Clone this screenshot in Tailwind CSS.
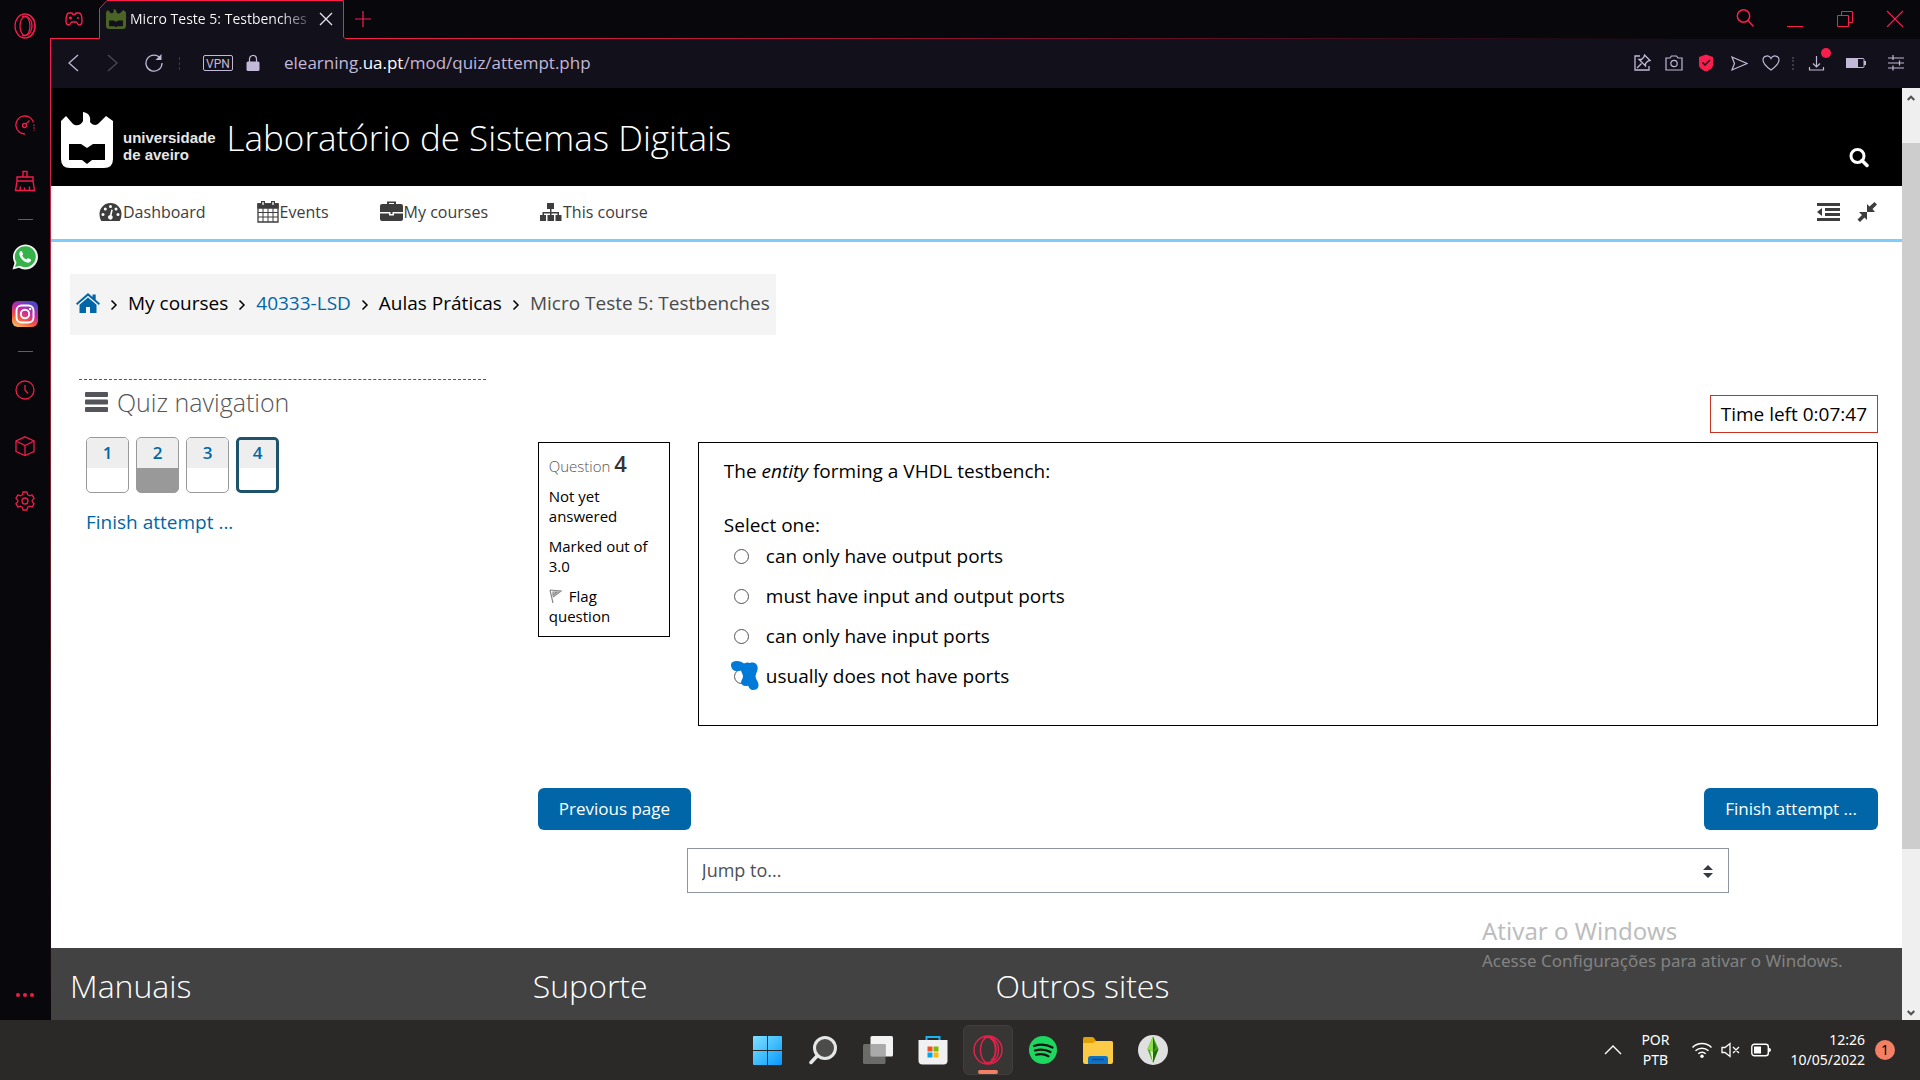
<!DOCTYPE html>
<html lang="pt">
<head>
<meta charset="utf-8">
<title>Micro Teste 5: Testbenches</title>
<script src="https://cdn.jsdelivr.net/npm/@tailwindcss/browser@4"></script>
</head>
<body class="min-h-screen flex flex-col bg-[#08070c] font-['Open_Sans',sans-serif] text-black">
<div class="flex flex-1">

  <!-- Browser sidebar -->
  <aside class="relative w-[51px] shrink-0 flex flex-col items-center bg-[#08070c] pr-px text-[#ee1c4a]">
    <div class="absolute right-0 top-[38px] bottom-0 w-px bg-gradient-to-b from-[#fa1e4e] to-[#08070c]"></div>
    <button class="mt-[13px] size-[26px]" aria-label="Opera"><svg viewBox="0 0 26 26" class="size-full" fill="none" stroke="currentColor" stroke-width="1.3"><ellipse cx="13" cy="13" rx="10" ry="12"/><ellipse cx="13" cy="13" rx="5" ry="9.500"/><path d="M10 3.500c7-1.500 10 4 10 9.500s-3 11-10 9.500M16 1.500c5 2 7 7 7 11.500s-2 9.500-7 11.500"/></svg></button>
    <button class="mt-[76px] size-5" aria-label="Speed"><svg viewBox="0 0 20 20" class="size-full" fill="none" stroke="currentColor" stroke-width="1.300"><path d="M10 19a9 9 0 1 1 8.500-11.500"/><path d="M19 9.500v6" stroke-dasharray="1.500 1.200"/><circle cx="9.500" cy="10.500" r="2"/><path d="M11 9l3.500-3.500"/></svg></button>
    <button class="mt-[35px] size-[22px]" aria-label="Cleaner"><svg viewBox="0 0 22 22" class="size-full" fill="none" stroke="currentColor" stroke-width="1.400"><path d="M9 7V1.500h4V7M3 11V7h16v4zM3 11l-1.500 9.500h19L19 11M6 20.500l.5-4M10.500 20.500v-3M15.500 20.500v-4"/></svg></button>
    <div class="mt-[27px] h-px w-[15px] bg-current"></div>
    <button class="mt-6 size-[26px]" aria-label="WhatsApp"><svg viewBox="0 0 26 26" class="size-full"><path d="M.5 25.500l2-6.500A12.500 12.500 0 1 1 7 23.700z" fill="#f3f3f3"/><path d="M3 23l1.500-4.500A10.500 10.500 0 1 1 8 21.800z" fill="#35b34a"/><path d="M9 7c-1.200.7-2 2-1.500 4 1 3.500 4 6.500 7.500 7.500 2 .5 3.500-.5 4-2 .2-.8 0-1-.5-1.200l-2.300-1c-.5-.2-.8 0-1.500 1.200-2-.6-3.600-2-4.500-4 .9-.9 1-1.100.8-1.600L10 7.500c-.2-.5-.5-.6-1-.5z" fill="#fff"/></svg></button>
    <button class="mt-[31px] size-[26px]" aria-label="Instagram"><svg viewBox="0 0 26 26" class="size-full"><defs><linearGradient id="ig" x1=".1" y1="1" x2=".6" y2="0"><stop offset="0" stop-color="#fdc468"/><stop offset=".35" stop-color="#f3563f"/><stop offset=".65" stop-color="#c32aa3"/><stop offset="1" stop-color="#5146c8"/></linearGradient></defs><rect width="26" height="26" rx="6" fill="url(#ig)"/><rect x="4.500" y="4.500" width="17" height="17" rx="5" fill="none" stroke="#fff" stroke-width="1.900"/><circle cx="13" cy="13" r="4.200" fill="none" stroke="#fff" stroke-width="1.900"/><circle cx="18.200" cy="8" r="1.200" fill="#fff"/></svg></button>
    <div class="mt-6 h-px w-[15px] bg-current"></div>
    <button class="mt-7 size-5" aria-label="History"><svg viewBox="0 0 20 20" class="size-full" fill="none" stroke="currentColor" stroke-width="1.300"><circle cx="10" cy="10" r="9"/><path d="M10 5v5l3 3.500"/></svg></button>
    <button class="mt-9 size-5" aria-label="Extensions"><svg viewBox="0 0 20 20" class="size-full" fill="none" stroke="currentColor" stroke-width="1.300"><path d="M10 .8l9 4.200v10.500L10 19.500 1 15.500V5zM1 5l9 4.500L19 5M10 9.500v10"/></svg></button>
    <button class="mt-[35px] size-5" aria-label="Settings"><svg viewBox="0 0 20 20" class="size-full" fill="none" stroke="currentColor" stroke-width="1.300" stroke-linejoin="round"><path d="M8 1h4l.6 2.700 1.900 1.100 2.600-.9 2 3.500L17.200 9.200v1.600l1.900 1.800-2 3.500-2.600-.9-1.900 1.100L12 19H8l-.6-2.700-1.900-1.100-2.600.9-2-3.500 1.900-1.800V9.200L.9 7.400l2-3.500 2.600.9 1.900-1.100z"/><circle cx="10" cy="10" r="3"/></svg></button>
    <button class="mt-auto mb-[23px] flex gap-[3px]" aria-label="More"><i class="size-1 rounded-full bg-current"></i><i class="size-1 rounded-full bg-current"></i><i class="size-1 rounded-full bg-current"></i></button>
  </aside>

  <div class="flex min-w-0 flex-1 flex-col">
    <!-- Tab strip -->
    <div class="flex h-[39px] text-[#fa1e4e]">
      <button class="flex w-12 items-center justify-center border-b border-[#fa1e4e] pr-2" aria-label="GX Corner"><svg viewBox="0 0 18 14" class="ml-[6px] h-[14px] w-[18px]" fill="none" stroke="currentColor" stroke-width="1.400"><path d="M4 1h3l1 1.500h2L11 1h3c2 0 3 4 3 8 0 3-1.500 4-3 4-1.500 0-1.500-3-3-3H7c-1.500 0-1.500 3-3 3-1.500 0-3-1-3-4 0-4 1-8 3-8z"/><path d="M4 6h3M5.500 4.500v3M12 6h2"/></svg></button>
      <div class="relative w-[246px] shrink-0">
        <svg viewBox="0 0 246 39" class="absolute inset-0 h-[39px] w-[246px]"><path d="M0 39V38.500L.5 8.500 8 1H244.500V37l1.500 1.500V39z" fill="#12101a"/><path d="M0 38.500H.5V8.500L8 .5H244.500V37l1.500 1.500" fill="none" stroke="#fa1e4e"/></svg>
        <div class="relative flex h-[34px] items-center pl-[7px] pr-3 pt-1">
          <svg viewBox="0 0 52 56" class="h-5 w-5 shrink-0" preserveAspectRatio="none"><path d="M0 9l5-6 7 8c4 3 7 0 8-3V0c6 1 8 5 7 10 3 4 8 4 12-1l6-6 7 6v38q0 9-9 9H9q-9 0-9-9z" fill="#4b6426"/><path d="M8 32h12l6 4 6-4h12v16H30l-4 3-4-3H8z" fill="#12101a"/></svg>
          <span class="ml-1 bg-gradient-to-r from-white from-85% to-[#55535c] bg-clip-text text-sm leading-6 whitespace-nowrap text-transparent">Micro Teste 5: Testbenches</span>
          <button class="ml-auto" aria-label="Close tab"><svg viewBox="0 0 14 14" class="size-[14px]" stroke="#e8e6f0" stroke-width="1.300"><path d="M1 1l12 12M13 1L1 13"/></svg></button>
        </div>
      </div>
      <div class="relative flex flex-1 justify-end">
        <div class="absolute bottom-0 left-0 h-px w-full bg-gradient-to-r from-[#fa1e4e] to-transparent to-85%"></div>
        <button class="absolute left-[10px] top-[11px]" aria-label="New tab"><svg viewBox="0 0 16 16" class="size-4" stroke="currentColor" stroke-width="1.200"><path d="M8 0v16M0 8h16"/></svg></button>
        <div class="flex gap-8 pr-4 pt-[9px]">
          <button class="size-[18px]" aria-label="Search tabs"><svg viewBox="0 0 18 18" class="size-full" fill="none" stroke="currentColor" stroke-width="1.500"><circle cx="7.500" cy="7" r="6.200"/><path d="M12 11.500l5.500 6"/></svg></button>
          <button class="size-[18px]" aria-label="Minimize"><svg viewBox="0 0 18 18" class="size-full" stroke="currentColor"><path d="M1 17.500h16"/></svg></button>
          <button class="size-[18px]" aria-label="Restore"><svg viewBox="0 0 18 18" class="size-full" fill="none" stroke="currentColor"><path d="M1.500 6.500h11v11h-11zM5.500 6.500v-4h11v11h-4"/></svg></button>
          <button class="size-[18px]" aria-label="Close"><svg viewBox="0 0 18 18" class="size-full" stroke="currentColor" stroke-width="1.200"><path d="M1 2l16 16M17 2L1 18"/></svg></button>
        </div>
      </div>
    </div>

    <!-- Address bar -->
    <div class="flex h-[49px] items-center bg-[#12101a] pl-4 pr-[15px] pb-px text-[#c2b8d8]">
      <button aria-label="Back"><svg viewBox="0 0 12 18" class="h-[18px] w-3" fill="none" stroke="currentColor" stroke-width="1.300"><path d="M11 1L2 9l9 8"/></svg></button>
      <button class="ml-7" aria-label="Forward"><svg viewBox="0 0 12 18" class="h-[18px] w-3" fill="none" stroke="#4c4858" stroke-width="1.300"><path d="M1 1l9 8-9 8"/></svg></button>
      <button class="ml-[26px]" aria-label="Reload"><svg viewBox="0 0 18 18" class="size-[18px]" fill="none" stroke="currentColor" stroke-width="1.300"><path d="M15.500 4.500A8 8 0 1 0 17 9"/><path d="M16.500 0v6h-6z" fill="currentColor" stroke="none"/></svg></button>
      <div class="ml-4 h-[13px] border-l border-dashed border-[#3c3948]"></div>
      <span class="ml-[23px] flex h-4 w-[30px] items-center justify-center rounded-xs border border-[#c2b8d8] pt-px font-['Roboto',sans-serif] text-xs leading-none">VPN</span>
      <svg viewBox="0 0 14 16" class="ml-[13px] h-4 w-[14px]"><rect y="6.500" x=".5" width="13" height="9.500" rx="1.500" fill="currentColor"/><path d="M3.500 7V4a3.500 3.500 0 0 1 7 0v3" fill="none" stroke="currentColor" stroke-width="1.200"/></svg>
      <span class="ml-6 text-[17px]">elearning.<span class="text-white">ua.pt</span>/mod/quiz/attempt.php</span>
      <div class="ml-auto flex items-center">
        <button aria-label="Pin"><svg viewBox="0 0 18 18" class="size-[18px]" fill="none" stroke="currentColor" stroke-width="1.300"><path d="M7 2H2v14h14v-4M4 14l4.500-4.500M11.500 1l5.500 5.500-2 .5-2.500 2.500V12L6 5.500h2.500L11 3z"/></svg></button>
        <button class="ml-[14px]" aria-label="Snapshot"><svg viewBox="0 0 18 18" class="size-[18px]" fill="none" stroke="currentColor" stroke-width="1.200"><path d="M1 4h4l1.500-2h5L13 4h4v12H1z"/><circle cx="9" cy="9.500" r="3.200"/></svg></button>
        <button class="ml-[15px]" aria-label="Ad blocker"><svg viewBox="0 0 16 18" class="h-[18px] w-4"><path d="M8 .5L15 3v8c0 3-3 5-7 6.500C4 16 1 14 1 11V3z" fill="#fa1e4e"/><path d="M4.500 8.500L7 11l5-5" fill="none" stroke="#12101a" stroke-width="1.500"/></svg></button>
        <button class="ml-4" aria-label="Send"><svg viewBox="0 0 18 18" class="size-[18px]" fill="none" stroke="currentColor" stroke-width="1.200"><path d="M2 3l15 6.500L2 16l2.500-6.500z"/></svg></button>
        <button class="ml-[14px]" aria-label="Bookmark"><svg viewBox="0 0 18 18" class="size-[18px]" fill="none" stroke="currentColor" stroke-width="1.200"><path d="M9 16C4 12.500 1 9.500 1 6c0-4.500 6-5.500 8-1.500C11 .5 17 1.500 17 6c0 3.500-3 6.500-8 10z"/></svg></button>
        <div class="ml-3 h-[13px] border-l-2 border-dotted border-[#3c3948]"></div>
        <button class="relative ml-[14px]" aria-label="Downloads"><svg viewBox="0 0 18 18" class="size-[18px]" fill="none" stroke="currentColor" stroke-width="1.200"><path d="M1.500 13v3h14v-3M8.500 2v11M5 9.500L8.500 13 12 9.500"/></svg><i class="absolute -right-[5px] -top-[6px] size-[10px] rounded-full bg-[#fa1e4e]"></i></button>
        <button class="ml-5" aria-label="Battery saver"><svg viewBox="0 0 20 12" class="h-3 w-5"><rect x=".5" y="1.500" width="17.500" height="9" rx="1" fill="none" stroke="currentColor"/><path d="M0 1h12v10H0zM18 4h2v4h-2z" fill="currentColor"/></svg></button>
        <button class="ml-[21px]" aria-label="Easy setup"><svg viewBox="0 0 18 18" class="size-[18px]" stroke="currentColor" stroke-width="1.200"><path d="M1 4h16M1 9h16M1 14h16M6 1v5M12.500 6.500v5M6 11.500v5"/></svg></button>
      </div>
    </div>

    <div class="flex flex-1">
      <!-- Web page -->
      <div class="flex min-w-0 flex-1 flex-col bg-white">
        <header class="flex h-[98px] bg-black pl-[10px] pr-[33px] text-white">
          <svg viewBox="0 0 52 56" class="mt-6 h-14 w-[52px] shrink-0" preserveAspectRatio="none"><path d="M0 9l5-5 7 8c4 3 9 0 10-3V0c6 1 8 5 7 10 3 4 7 4 10 0l6-6 7 5v38q0 9-9 9H9q-9 0-9-9z" fill="#fff"/><path d="M8 32h12l6 4 6-4h12v16H31l-5 4-5-4H8z" fill="#000"/></svg>
          <div class="ml-[10px] mt-[41px] font-['Liberation_Sans',sans-serif] text-[15px] leading-[17px] font-bold text-[#e6e6e6]">universidade<br>de aveiro</div>
          <h1 class="ml-[11px] mt-6 text-[35px] leading-[52px] font-light whitespace-nowrap">Laboratório de Sistemas Digitais</h1>
          <button class="ml-auto mt-10 self-start pt-5" aria-label="Search"><svg viewBox="0 0 20 20" class="size-5" fill="none" stroke="#fff" stroke-width="3"><circle cx="8.500" cy="8" r="6.500"/><path d="M13 12.500l5 5" stroke-width="3.500" stroke-linecap="round"/></svg></button>
        </header>

        <nav class="flex h-14 items-center border-b-3 border-[#7dcdfc] pl-12 pr-6 pb-[2px] text-base text-[#3d3d3d]">
          <a href="#" class="flex items-center gap-px"><svg viewBox="0 0 23 20" class="h-5 w-[23px]"><path d="M11.500 1A11 11 0 0 0 .5 12c0 3 .8 5 1.800 7h18.400c1-2 1.800-4 1.800-7a11 11 0 0 0-11-11z" fill="currentColor"/><g fill="#fff"><circle cx="4" cy="12.500" r="1.500"/><circle cx="6.300" cy="7" r="1.500"/><circle cx="11.500" cy="4.500" r="1.500"/><circle cx="19" cy="12.500" r="1.500"/><circle cx="17" cy="7" r="1.500"/><path d="M12.300 7.500l1.500.4-1.200 5.300a2.400 2.400 0 1 1-1.700-.3z"/></g></svg>Dashboard</a>
          <a href="#" class="ml-[51px] flex items-center gap-px"><svg viewBox="0 0 22 23" class="h-[23px] w-[22px]" fill="none" stroke="currentColor" stroke-width="1.300"><path d="M1 4h20v18H1z"/><path d="M1 4h20v4H1z" fill="currentColor"/><path d="M6 8v14M11 8v14M16 8v14M1 12.500h20M1 17h20" stroke-width="1"/><path d="M6 1v5M16 1v5" stroke-width="4"/><path d="M6 2v3M16 2v3" stroke="#fff"/></svg>Events</a>
          <a href="#" class="ml-[51px] flex items-center gap-px"><svg viewBox="0 0 23 23" class="size-[23px]" fill="currentColor"><path d="M7 4V1.500h9V4h-2V3H9v1zM0 6q0-2 2-2h19q2 0 2 2v6H0zM0 13.500h9v2h5v-2h9V19q0 2-2 2H2q-2 0-2-2zM10.500 12h2v2h-2z"/></svg>My courses</a>
          <a href="#" class="ml-[51px] flex items-center gap-px"><svg viewBox="0 0 23 20" class="h-5 w-[23px]" fill="currentColor"><path d="M8 1h7v6h-2.500v3H20v3h2.500v6h-6v-6h2v-1.500h-6V13h2.500v6H8.500v-6H11v-1.500H5V13h2v6H1v-6h2.500v-3H11V7H8z"/></svg>This course</a>
          <div class="ml-auto flex items-center gap-4">
            <button aria-label="Toggle blocks"><svg viewBox="0 0 23 18" class="h-[18px] w-[23px]" fill="currentColor"><path d="M0 0h23v3H0zM8 5h15v3H8zM8 10h15v3H8zM0 15h23v3H0zM5 5v8L0 9z"/></svg></button>
            <button aria-label="Full screen"><svg viewBox="0 0 22 22" class="size-[22px]" fill="currentColor"><path d="M11 3l2.500 2.500L18.500 1 21 3.500 16.500 8 19 11h-8zM3 11h8v8l-2.500-2.500L4 21l-2.500-2.500L6 14z"/></svg></button>
          </div>
        </nav>

        <main class="flex-1 pl-[19px] pr-6">
          <nav class="mt-8 inline-flex h-[61px] items-center bg-[#f4f4f4] px-[6px] pb-[3px] text-[19px]" aria-label="Breadcrumb">
            <a href="#" aria-label="Home"><svg viewBox="0 0 24 20" class="h-5 w-6" fill="#0066a7"><path d="M12 0l4.500 4V1.500h3.200v5.200L24 10.500 22.800 12 12 2.800 1.200 12 0 10.500z"/><path d="M12 4.500l8.500 7.200V20H14v-6h-4v6H3.500v-8.300z"/></svg></a>
            <svg viewBox="0 0 8 12" class="mx-[10px] mt-[3px] h-3 w-2" fill="none" stroke="#000" stroke-width="1.500"><path d="M1.500 1.500L6 6l-4.500 4.500"/></svg>
            <span>My courses</span>
            <svg viewBox="0 0 8 12" class="mx-[10px] mt-[3px] h-3 w-2" fill="none" stroke="#000" stroke-width="1.500"><path d="M1.500 1.500L6 6l-4.500 4.500"/></svg>
            <a href="#" class="text-[#0066a7]">40333-LSD</a>
            <svg viewBox="0 0 8 12" class="mx-[10px] mt-[3px] h-3 w-2" fill="none" stroke="#000" stroke-width="1.500"><path d="M1.500 1.500L6 6l-4.500 4.500"/></svg>
            <span>Aulas Práticas</span>
            <svg viewBox="0 0 8 12" class="mx-[10px] mt-[3px] h-3 w-2" fill="none" stroke="#000" stroke-width="1.500"><path d="M1.500 1.500L6 6l-4.500 4.500"/></svg>
            <span class="text-[#4a4a4a]">Micro Teste 5: Testbenches</span>
          </nav>

          <div class="mt-11 flex">
            <section class="ml-[9px] w-9/40 shrink-0 border-t border-dashed border-[#555] pt-[6px]">
              <h2 class="flex items-center gap-[9px] pl-[6px] text-[25px] leading-8 font-light text-[#54555a]"><svg viewBox="0 0 23 20" class="h-5 w-[23px]" fill="currentColor"><rect width="23" height="5" rx="1"/><rect y="7.500" width="23" height="5" rx="1"/><rect y="15" width="23" height="5" rx="1"/></svg>Quiz navigation</h2>
              <div class="mt-[19px] flex gap-[7px] pl-[7px] text-[17px] font-semibold text-[#0066a7]">
                <a href="#" class="flex h-14 w-[43px] flex-col overflow-hidden rounded-[5px] border border-[#999] bg-white"><span class="h-[30px] bg-[#eee] text-center leading-[30px]">1</span></a>
                <a href="#" class="flex h-14 w-[43px] flex-col overflow-hidden rounded-[5px] border border-[#999] bg-[#999]"><span class="h-[30px] bg-[#eee] text-center leading-[30px]">2</span></a>
                <a href="#" class="flex h-14 w-[43px] flex-col overflow-hidden rounded-[5px] border border-[#999] bg-white"><span class="h-[30px] bg-[#eee] text-center leading-[30px]">3</span></a>
                <a href="#" class="flex h-14 w-[43px] flex-col overflow-hidden rounded-[5px] border-3 border-[#1f536b] bg-white"><span class="h-7 bg-[#eee] text-center leading-[26px]">4</span></a>
              </div>
              <a href="#" class="mt-[17px] ml-[7px] inline-block text-[19px] leading-6 text-[#0066a7]">Finish attempt ...</a>
            </section>

            <form class="ml-[52px] flex min-w-0 flex-1 flex-col pt-4 text-[19px]">
              <div class="flex h-[38px] items-center self-end border border-[#ca3120] px-[10px]">Time left 0:07:47</div>
              <div class="mt-[9px] flex items-start">
                <div class="w-[132px] shrink-0 border border-black px-[10px] pt-[6px] pb-[10px] text-[15px] leading-5">
                  <h3 class="leading-7 font-light text-[#555]">Question <span class="text-[22px] leading-7 font-semibold text-[#333]">4</span></h3>
                  <div class="mt-[6px]">Not yet answered</div>
                  <div class="mt-[10px]">Marked out of 3.0</div>
                  <label class="mt-[10px] block cursor-pointer"><input type="checkbox" class="sr-only"><svg viewBox="0 0 13 15" class="mr-[7px] inline h-[15px] w-[13px] align-[-2px]" fill="none" stroke="#888" stroke-width="1.200"><path d="M1 1l3 13M1 1l11 1-8 6M4 3v3l4-3z"/></svg>Flag<br>question</label>
                </div>
                <div class="ml-7 min-h-[284px] flex-1 border border-black pl-[25px] pt-4">
                  <p class="leading-6">The <em>entity</em> forming a VHDL testbench:</p>
                  <fieldset class="mt-[30px]">
                    <legend class="leading-6">Select one:</legend>
                    <div class="mt-[7px] flex flex-col gap-4 pl-[10px] leading-6">
                      <label class="flex items-center gap-[17px]"><input type="radio" name="answer" class="m-0 size-[15px] appearance-none rounded-full border border-[#555] bg-white checked:border-4">can only have output ports</label>
                      <label class="flex items-center gap-[17px]"><input type="radio" name="answer" class="m-0 size-[15px] appearance-none rounded-full border border-[#555] bg-white checked:border-4">must have input and output ports</label>
                      <label class="flex items-center gap-[17px]"><input type="radio" name="answer" class="m-0 size-[15px] appearance-none rounded-full border border-[#555] bg-white checked:border-4">can only have input ports</label>
                      <label class="relative flex items-center gap-[17px]"><input type="radio" name="answer" class="m-0 size-[15px] appearance-none rounded-full border border-[#555] bg-white checked:border-4">usually does not have ports<svg viewBox="0 0 28 29" class="absolute -left-[3px] -top-[3px] h-[29px] w-7" fill="#007ad9"><path d="M0 4C0 1 3 0 6 0c3 0 5 1 7 2.500C15 1.500 17 1 19 2c2-1 5-.5 6.500 1.500S27 8 26 10.500 24 15 25 17.500c1 2.500 3 4.500 2.500 7.500s-3 4-5.500 4-4-2-5-4.500c-3 1.500-6.500 0-7-3 0-2 2-4 2-6 0-2-1.500-4-2-6-2 .5-5 1-7 0S0 6 0 4z"/></svg></label>
                    </div>
                  </fieldset>
                </div>
              </div>
              <div class="mt-[62px] flex justify-between text-[17px] font-medium text-white">
                <button type="button" class="h-[42px] rounded-md bg-[#0066a7] px-[21px]">Previous page</button>
                <button type="submit" class="h-[42px] rounded-md bg-[#0066a7] px-[21px]">Finish attempt ...</button>
              </div>
              <div class="relative mt-[18px] mb-[55px] ml-[149px] mr-[149px]">
                <select aria-label="Jump to" class="block h-[45px] w-full appearance-none border border-[#8f959e] bg-white px-[14px] pb-px text-lg text-[#495057]"><option>Jump to...</option></select>
                <svg viewBox="0 0 10 13" class="pointer-events-none absolute right-4 top-[17px] h-[13px] w-[10px]" fill="#343a40"><path d="M5 0l5 5H0zM0 8h10l-5 5z"/></svg>
              </div>
            </form>
          </div>
        </main>

        <footer class="grid h-[72px] grid-cols-4 bg-[#424242] pt-[13px] text-[32px] leading-[50px] font-light text-white">
          <h2 class="pl-[19px]">Manuais</h2><h2 class="pl-[19px]">Suporte</h2><h2 class="pl-[19px]">Outros sites</h2>
        </footer>
      </div>

      <!-- Page scrollbar -->
      <div class="flex w-[18px] shrink-0 flex-col items-center bg-[#efefef]">
        <svg viewBox="0 0 8 6" class="mt-[7px] h-[6px] w-2" fill="none" stroke="#505050" stroke-width="2"><path d="M.7 5L4 1.700 7.300 5"/></svg>
        <div class="mt-[42px] w-full grow-[705] bg-[#cdcdcd]"></div>
        <div class="grow-[161]"></div>
        <svg viewBox="0 0 8 6" class="mb-1 h-[6px] w-2" fill="none" stroke="#505050" stroke-width="2"><path d="M.7 1L4 4.300 7.300 1"/></svg>
      </div>
    </div>
  </div>
</div>

<!-- Activation watermark -->
<div class="pointer-events-none absolute right-[78px] top-[914px] w-[360px] font-['Noto_Sans','Open_Sans',sans-serif] whitespace-nowrap">
  <div class="text-2xl leading-[34px] text-[#bdbdbd]">Ativar o Windows</div>
  <div class="text-[17px] leading-[26px] text-[#828282]">Acesse Configurações para ativar o Windows.</div>
</div>

<!-- Taskbar -->
<div class="grid h-[60px] shrink-0 grid-cols-[1fr_auto_1fr] items-center bg-[#2a2927] font-['Noto_Sans','Open_Sans',sans-serif] text-white">
  <div></div>
  <div class="flex gap-[5px]">
    <button class="flex size-[50px] items-center justify-center" aria-label="Start"><svg viewBox="0 0 29 29" class="size-[29px]"><defs><linearGradient id="win" gradientUnits="userSpaceOnUse" x1="0" y1="0" x2="29" y2="29"><stop offset="0" stop-color="#82deff"/><stop offset=".5" stop-color="#42bfff"/><stop offset="1" stop-color="#0a96ff"/></linearGradient></defs><path d="M0 1q0-1 1-1h13v14H0zM15 0h13q1 0 1 1v13H15zM0 15h14v14H1q-1 0-1-1zM15 15h14v13q0 1-1 1H15z" fill="url(#win)"/></svg></button>
    <button class="flex size-[50px] items-center justify-center" aria-label="Search"><svg viewBox="0 0 28 30" class="h-[30px] w-7" fill="none" stroke="#e4e6e8"><circle cx="16" cy="13" r="10.500" stroke-width="3" fill="#4c4c4b"/><path d="M8.500 20.500L2 27.500" stroke-width="3.500" stroke-linecap="round"/></svg></button>
    <button class="flex size-[50px] items-center justify-center" aria-label="Task view"><svg viewBox="0 0 30 28" class="h-7 w-[30px]"><rect x="7.500" width="22.500" height="20.500" rx="1.500" fill="#f2f2f2"/><rect y="8" width="22.500" height="20" rx="1.500" fill="#777" fill-opacity=".85"/><path d="M7.500 8h15v12.500H9q-1.500 0-1.500-1.500z" fill="#aaa"/></svg></button>
    <button class="flex size-[50px] items-center justify-center" aria-label="Store"><svg viewBox="0 0 30 30" class="size-[30px]"><path d="M8.500 5V2h13v3" fill="none" stroke="#19b4f2" stroke-width="2"/><path d="M.5 5h29v20.500q0 4-4 4h-21q-4 0-4-4z" fill="#f1f1f1"/><path d="M9.500 11.500h5v5h-5z" fill="#f25022"/><path d="M15.500 11.500h5v5h-5z" fill="#7fba00"/><path d="M9.500 17.500h5v5h-5z" fill="#00a4ef"/><path d="M15.500 17.500h5v5h-5z" fill="#ffb900"/></svg></button>
    <button class="relative flex size-[50px] items-center justify-center rounded-md border border-[#403f3e] bg-[#373635]" aria-label="Opera GX"><svg viewBox="0 0 30 30" class="size-[30px]" fill="none" stroke="#e8204c" stroke-width="1.400"><circle cx="15" cy="15" r="14"/><ellipse cx="15" cy="15" rx="7.500" ry="12.800"/><path d="M11 2.200c8-2 14.500 4 14.500 12.800S19 29.800 11 27.800M17 3c4 2 6 7 6 12s-2 8-5 10.500"/></svg><i class="absolute bottom-0 h-1 w-5 rounded-full bg-[#f38064]"></i></button>
    <button class="flex size-[50px] items-center justify-center" aria-label="Spotify"><svg viewBox="0 0 28 28" class="size-7"><circle cx="14" cy="14" r="14" fill="#1ed760"/><path d="M5 10c6-2 13-1.500 18.500 1.500M6 14.500c5-1.500 11-1 15.500 1.500M7 18.800c4-1.200 8.500-.8 12.500 1.400" fill="none" stroke="#191414" stroke-width="2.200" stroke-linecap="round"/></svg></button>
    <button class="flex size-[50px] items-center justify-center" aria-label="File Explorer"><svg viewBox="0 0 30 27" class="h-[27px] w-[30px]"><path d="M0 1.500Q0 0 1.500 0H9q1.500 0 2.500 1.500L13 4v5H0z" fill="#e0a008"/><path d="M0 6h10l3-2h15.500Q30 4 30 5.500V25q0 2-2 2H2q-2 0-2-2z" fill="#fbcb45"/><path d="M5 27v-5.500Q5 19 7.500 19h15q2.500 0 2.500 2.500V27z" fill="#0f72c4"/><path d="M9 22.500h12" stroke="#0a4c8c" stroke-width="1.500"/></svg></button>
    <button class="flex size-[50px] items-center justify-center" aria-label="The Sims"><svg viewBox="0 0 30 30" class="size-[30px]"><circle cx="15" cy="15" r="15" fill="#dfe0df"/><path d="M15 1.500L20.500 14l-5.500 14-5.500-14z" fill="#3f9e1c"/><path d="M15 1.500V17l-5.500-3z" fill="#8fdc4a"/><path d="M15 1.500l2.500 11L15 17zM15 17l5.500-3-5.500 14z" fill="#1f6d10"/><path d="M15 28V17l-3-1.500z" fill="#d4f5b8"/></svg></button>
  </div>
  <div class="flex items-center justify-end pr-[25px] text-sm leading-5">
    <button aria-label="Hidden icons"><svg viewBox="0 0 18 10" class="h-[10px] w-[18px]" fill="none" stroke="#fff" stroke-width="1.400"><path d="M1 9l8-8 8 8"/></svg></button>
    <div class="ml-[19px] text-center">POR<br>PTB</div>
    <svg viewBox="0 0 22 18" class="ml-[21px] h-[18px] w-[22px]" fill="none" stroke="#fff" stroke-width="1.500"><path d="M1.500 6.500a13.500 13.500 0 0 1 19 0M4.500 9.800a9.500 9.500 0 0 1 13 0M7.300 12.800a5.500 5.500 0 0 1 7.400 0"/><circle cx="11" cy="15.300" r="1.700" fill="#fff" stroke="none"/></svg>
    <svg viewBox="0 0 20 16" class="ml-2 h-4 w-5" fill="none" stroke="#fff" stroke-width="1.300"><path d="M1 5.500h3L9 1.500v13l-5-4H1zM12 5l6 6M18 5l-6 6"/></svg>
    <svg viewBox="0 0 20 14" class="ml-[10px] h-[14px] w-5"><rect x=".8" y="1.300" width="16.500" height="11.400" rx="2.500" fill="none" stroke="#fff" stroke-width="1.400"/><path d="M3 3.500h7v7H3zM18 5q2 0 2 2t-2 2z" fill="#fff"/></svg>
    <div class="ml-5 text-right">12:26<br>10/05/2022</div>
    <span class="ml-[10px] flex size-5 items-center justify-center rounded-full bg-[#f38064] text-sm text-black">1</span>
  </div>
</div>
</body>
</html>
